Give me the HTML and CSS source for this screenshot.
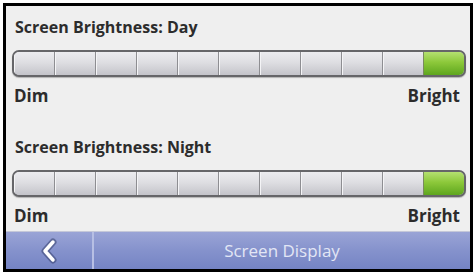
FILE: index.html
```html
<!DOCTYPE html>
<html>
<head>
<meta charset="utf-8">
<link rel="stylesheet" href="styles.css">
</head>
<body>
<div class="frame">
  <div class="content">
    <section class="setting">
      <div class="title">Screen Brightness: Day</div>
      <div class="bar">
        <span class="seg"></span><span class="seg"></span><span class="seg"></span><span class="seg"></span><span class="seg"></span><span class="seg"></span><span class="seg"></span><span class="seg"></span><span class="seg"></span><span class="seg"></span><span class="seg on"></span>
      </div>
      <div class="labels"><span>Dim</span><span>Bright</span></div>
    </section>
    <section class="setting second">
      <div class="title">Screen Brightness: Night</div>
      <div class="bar">
        <span class="seg"></span><span class="seg"></span><span class="seg"></span><span class="seg"></span><span class="seg"></span><span class="seg"></span><span class="seg"></span><span class="seg"></span><span class="seg"></span><span class="seg"></span><span class="seg on"></span>
      </div>
      <div class="labels"><span>Dim</span><span>Bright</span></div>
    </section>
  </div>
  <div class="footer">
    <div class="back">
      <svg width="20" height="26" viewBox="0 0 20 26">
        <path d="M14 4 L6 13 L14 22" fill="none" stroke="#34406e" stroke-width="7" stroke-linecap="round" stroke-linejoin="round" opacity="0.55"/>
        <path d="M14 4 L6 13 L14 22" fill="none" stroke="#ffffff" stroke-width="3.5" stroke-linecap="round" stroke-linejoin="round"/>
      </svg>
    </div>
    <div class="footer-title">Screen Display</div>
  </div>
</div>
</body>
</html>
```
FILE: styles.css
```css
html, body {
  margin: 0;
  padding: 0;
  background: #ffffff;
}
.frame {
  margin: 3px 0 0 3px;
  width: 464px;
  height: 263px;
  border: 3px solid #000;
  background: #efefef;
  display: flex;
  flex-direction: column;
  font-family: "Open Sans", "DejaVu Sans", sans-serif;
}
.content {
  flex: 1;
  padding: 11px 4px 0 6px;
}
.setting.second {
  margin-top: 31px;
}
.title {
  font-size: 16px;
  font-weight: 700;
  line-height: 20px;
  color: #2c2c2c;
  padding-left: 3px;
}
.bar {
  margin-top: 13px;
  height: 23px;
  border: 2px solid #666669;
  border-radius: 7px;
  display: flex;
  overflow: hidden;
  background: #d0d0d4;
  box-shadow: 0 1px 1px rgba(0,0,0,0.25);
}
.seg {
  flex: 1;
  border-left: 1px solid #8e8e92;
  box-shadow: inset 1px 0 0 #f4f4f6;
  background: linear-gradient(#ececef 0%, #dedee2 45%, #c4c4ca 100%);
}
.seg:first-child {
  border-left: none;
}
.seg.on {
  border-left: 1px solid #7a8a60;
  box-shadow: none;
  background: linear-gradient(#b4e070 0%, #8cc83a 45%, #5ea61e 100%);
}
.labels {
  display: flex;
  justify-content: space-between;
  padding: 0 6px 0 2px;
  margin-top: 9px;
  font-size: 17px;
  font-weight: 700;
  line-height: 20px;
  color: #2c2c2c;
}
.footer {
  height: 37px;
  display: flex;
  border-top: 1px solid #c5c8d8;
  background: linear-gradient(#9aa4d6 0%, #8592cc 50%, #7584c4 100%);
}
.back {
  width: 86px;
  display: flex;
  align-items: center;
  justify-content: center;
  border-right: 2px solid #b7bfe4;
}
.footer-title {
  flex: 1;
  display: flex;
  align-items: center;
  justify-content: center;
  font-size: 17px;
  color: #e2e6f5;
}
```
